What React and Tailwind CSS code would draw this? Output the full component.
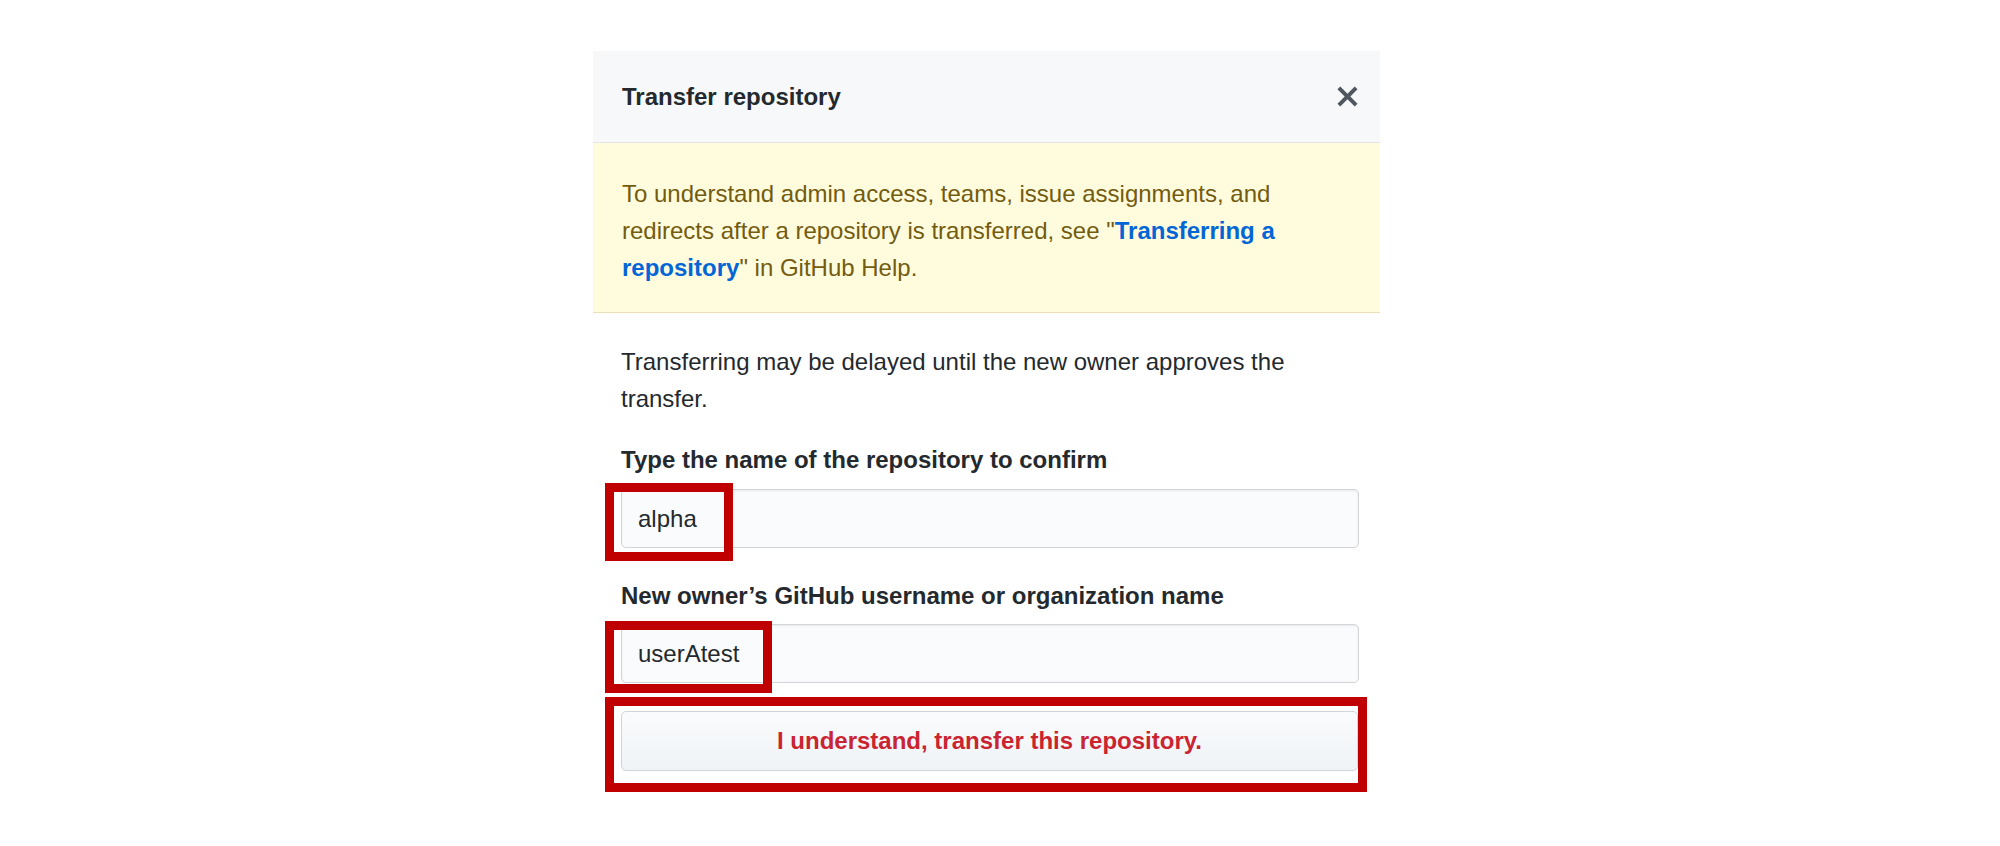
export default function App() {
  const font = { fontFamily: '"Liberation Sans", Arial, sans-serif' };
  return (
    <div className="min-h-[846px] w-full bg-white" style={font}>
      <div className="pl-[593px] pt-[51px]">
        <div className="w-[787px] bg-white">
          {/* Header */}
          <div className="flex h-[92px] items-center justify-between border-b border-[#e1e4e8] bg-[#f6f8fa] pl-[29px] pr-[21px]">
            <h2 className="text-[24px] font-semibold text-[#24292e]">Transfer repository</h2>
            <svg width="23" height="31" viewBox="0 0 12 16" className="text-[#50575e]" fill="currentColor">
              <path d="M7.48 8l3.75 3.75-1.48 1.48L6 9.48l-3.75 3.75-1.48-1.48L4.52 8 .77 4.25l1.48-1.48L6 6.52l3.75-3.75 1.48 1.48L7.48 8z" />
            </svg>
          </div>
          {/* Flash */}
          <div className="h-[170px] border-b border-[#e9dfb8] bg-[#fffbdd] pl-[29px] pr-[21px] pt-[32px] text-[24px] leading-[37px] text-[#735c0f]">
            To understand admin access, teams, issue assignments, and
            <br />
            redirects after a repository is transferred, see "
            <a className="font-semibold text-[#0366d6]">Transferring a</a>
            <br />
            <a className="font-semibold text-[#0366d6]">repository</a>" in GitHub Help.
          </div>
          {/* Body */}
          <div className="pl-[28px] pr-[21px] pt-[30px] pb-[28px] text-[#24292e]">
            <p className="text-[24px] leading-[37px]">
              Transferring may be delayed until the new owner approves the
              <br />
              transfer.
            </p>
            <label className="mt-[24px] block text-[24px] font-semibold leading-[37px]">
              Type the name of the repository to confirm
            </label>
            <div className="relative mt-[11px]">
              <div className="flex h-[59px] items-center rounded-[5px] border border-[#d1d5da] bg-[#fafbfc] px-[16px] text-[24px] text-[#24292e] shadow-[inset_0_1px_2px_rgba(27,31,35,0.075)]">
                alpha
              </div>
              <div className="pointer-events-none absolute left-[-16px] top-[-6px] h-[78px] w-[128px] border-[9px] border-[#c00000]" />
            </div>
            <label className="mt-[29px] block text-[24px] font-semibold leading-[37px]">
              New owner’s GitHub username or organization name
            </label>
            <div className="relative mt-[10px]">
              <div className="flex h-[59px] items-center rounded-[5px] border border-[#d1d5da] bg-[#fafbfc] px-[16px] text-[24px] text-[#24292e] shadow-[inset_0_1px_2px_rgba(27,31,35,0.075)]">
                userAtest
              </div>
              <div className="pointer-events-none absolute left-[-16px] top-[-3px] h-[72px] w-[167px] border-[9px] border-[#c00000]" />
            </div>
            <div className="relative mt-[28px] pr-[1px]">
              <div className="flex h-[60px] items-center justify-center rounded-[5px] border border-[#d1d5da] bg-gradient-to-b from-[#fafbfc] to-[#eff3f6] text-[24px] font-semibold text-[#cb2431]">
                I understand, transfer this repository.
              </div>
              <div className="pointer-events-none absolute left-[-16px] top-[-14px] h-[95px] w-[762px] border-[9px] border-[#c00000]" />
            </div>
          </div>
        </div>
      </div>
    </div>
  );
}
